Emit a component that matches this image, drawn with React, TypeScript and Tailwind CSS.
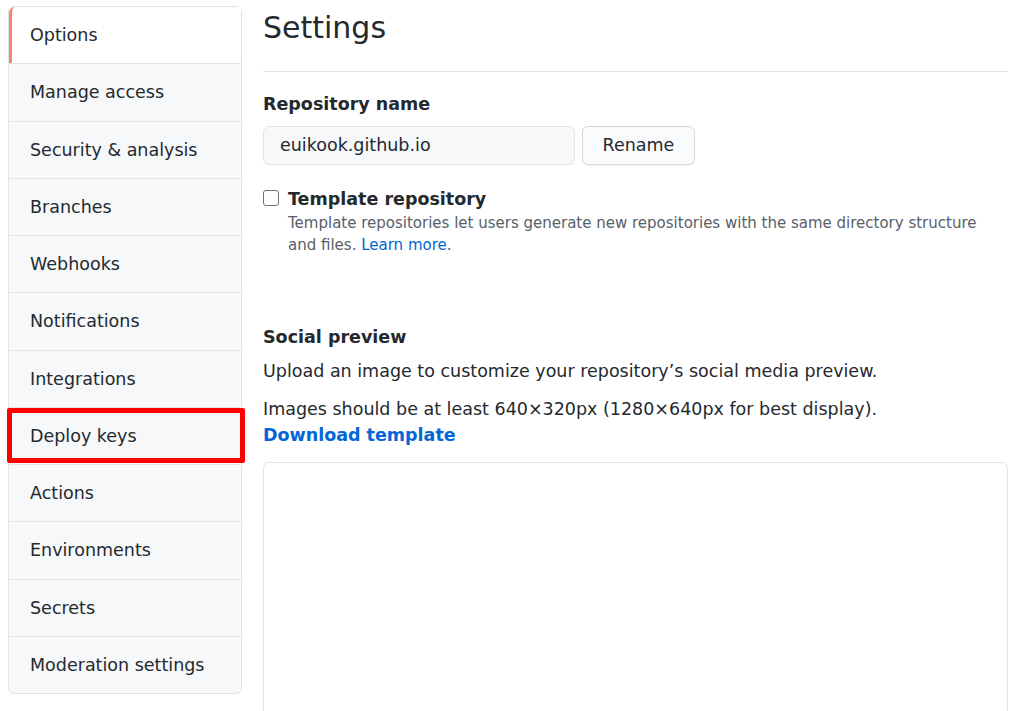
import React from 'react';

const items = [
  'Options',
  'Manage access',
  'Security & analysis',
  'Branches',
  'Webhooks',
  'Notifications',
  'Integrations',
  'Deploy keys',
  'Actions',
  'Environments',
  'Secrets',
  'Moderation settings',
];

const Sidebar: React.FC = () => (
  <nav className="w-[234px] shrink-0 self-start rounded-md border border-[#e1e4e8] bg-[#f6f8fa]">
    {items.map((label, i) => {
      const selected = i === 0;
      return (
        <div
          key={label}
          className={`relative flex items-center text-[17.5px] text-[#24292e] ${
            i > 0 ? 'h-[57.25px] border-t border-[#e1e4e8]' : 'h-[56.25px] rounded-tl-md'
          } ${selected ? 'border-l-[3px] border-l-[#f9826c] bg-white pl-[18px]' : 'pl-[21px]'}`}
        >
          {label}
          {label === 'Deploy keys' && (
            <div className="pointer-events-none absolute -left-[2px] -right-[4px] top-0 h-[55px] rounded-[2px] border-[5px] border-[#ff0000]" />
          )}
        </div>
      );
    })}
  </nav>
);

const App: React.FC = () => {
  return (
    <div className="flex min-h-[711px] gap-[21px] overflow-hidden bg-white pl-[8px] pt-[6px] font-['DejaVu_Sans',sans-serif] text-[#24292e]">
      <Sidebar />

      <main className="w-[745px] shrink-0">
        <div className="border-b border-[#e1e4e8] pb-[23px] pt-[2px]">
          <h1 className="text-[30px] font-normal leading-[40px]">Settings</h1>
        </div>

        <div className="mt-[19px]">
          <label className="block text-[17.5px] font-bold leading-[26px]">Repository name</label>
          <div className="mt-[9px] flex items-center gap-[7px]">
            <div className="flex h-[39px] w-[312px] items-center rounded-md border border-[#e1e4e8] bg-[#f6f8fa] px-[16px] text-[17.5px]">
              euikook.github.io
            </div>
            <button className="h-[39px] w-[113px] rounded-md border border-[#d5d8da] bg-[#fafbfc] text-[17.5px] shadow-[0_1px_0_rgba(27,31,35,0.04)]">
              Rename
            </button>
          </div>
        </div>

        <div className="mt-[21px] flex gap-[9px]">
          <div className="mt-[4px] h-[16px] w-[16px] shrink-0 rounded-[3px] border border-[#6a737d] bg-white" />
          <div>
            <div className="text-[17.5px] font-bold leading-[26px]">Template repository</div>
            <p className="text-[15px] leading-[22px] text-[#586069]">
              Template repositories let users generate new repositories with the same directory structure
              <br />
              and files. <span className="text-[#0366d6]">Learn more</span>.
            </p>
          </div>
        </div>

        <div className="mt-[68px]">
          <h2 className="text-[17.5px] font-bold leading-[26px]">Social preview</h2>
          <p className="mt-[8px] text-[17.5px] leading-[26px]">
            Upload an image to customize your repository’s social media preview.
          </p>
          <p className="mt-[12px] text-[17.5px] leading-[26px]">
            Images should be at least 640×320px (1280×640px for best display).
            <br />
            <span className="font-bold text-[#0366d6]">Download template</span>
          </p>
          <div className="mt-[14px] h-[320px] rounded-md border border-[#e1e4e8]" />
        </div>
      </main>
    </div>
  );
};

export default App;
